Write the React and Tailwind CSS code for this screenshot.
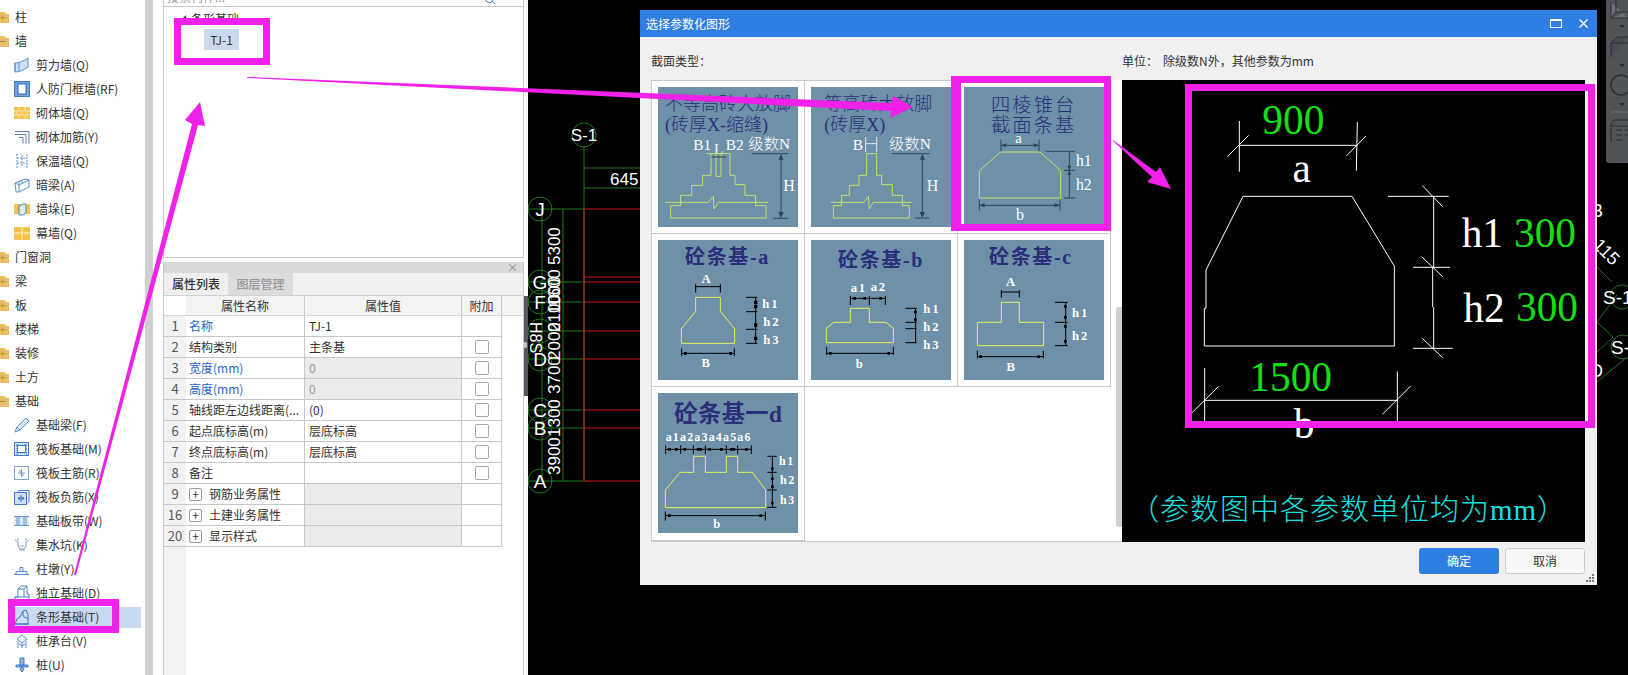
import React from "react";
import { Search } from "lucide-react";

const CJK = "font-['Noto_Sans_CJK_SC',sans-serif]";
const SERIF = "font-['Liberation_Serif','Noto_Sans_CJK_SC',serif]";
const SANS = "font-['Liberation_Sans','Noto_Sans_CJK_SC',sans-serif]";

const Folder = ({ open }) => (
  <svg width="9" height="14" viewBox="0 0 9 14" className="shrink-0">
    <path d="M0 2h5l1 2h3v9H0z" fill="#e6bd68" />
    <path d="M0 7h6v1H0z" fill={open ? "#a98a4a" : "#c9963c"} />
    {!open && <path d="M2 5h1v5H2z" fill="#c9963c" />}
  </svg>
);

// little tree icons, 16x16
const ICONS = {
  shear: (
    <>
      <path d="M1 6C5 6 10 4 14 1v9c-4 3-9 5-13 5z" fill="#cfe0f4" stroke="#5b8fd0" />
      <path d="M1 6v9M5 5.500v9" stroke="#5b8fd0" fill="none" />
    </>
  ),
  door: (
    <>
      <rect x="0.500" y="0.500" width="15" height="15" fill="#6fa0dc" stroke="#3f78c4" />
      <rect x="4" y="3" width="8" height="10" fill="#fff" stroke="#2f68b4" />
    </>
  ),
  brick: (
    <>
      <rect x="0" y="2" width="16" height="12" fill="#f7c24a" />
      <path d="M0 6h16M0 10h16M5 2v4M11 2v4M8 6v4M3 6v4M13 6v4M5 10v4M11 10v4" stroke="#fbe3a4" fill="none" />
    </>
  ),
  rebar: <path d="M1 2.500h14v12M1 5.500h11v9M5 8.500h4v6" stroke="#5b7fa8" fill="none" />,
  insul: <path d="M3 1v14M8 2v12M13 1v14M3 5h10M3 10h10" stroke="#5b8fd0" strokeDasharray="2 1" fill="none" />,
  beam: <path d="M1 6l10-4 4 1v7L5 15H2zM1 6l4 2v7M5 8l10-5M5 4.500l0 3M8 3.500v3" stroke="#5b8fd0" fill="#fff" />,
  pier: (
    <>
      <rect x="0" y="3" width="16" height="10" fill="#f7c24a" />
      <path d="M5 5l4-2h3v9l-3 2H5z" fill="#dcebfa" stroke="#4f84c8" />
    </>
  ),
  curtain: (
    <>
      <rect x="0" y="2" width="16" height="13" fill="#f7c24a" />
      <path d="M0 8h16M8 2v13" stroke="#fbe3a4" strokeWidth="1.500" />
    </>
  ),
  fbeam: <path d="M1 15l2-5 9-9 3 3-9 9zM3 10l3 3" stroke="#5b8fd0" fill="#dcebfa" />,
  raft: (
    <>
      <rect x="0.500" y="1.500" width="14" height="13" fill="#dcebfa" stroke="#3f78c4" />
      <rect x="3.500" y="4.500" width="8" height="7" fill="#fff" stroke="#3f78c4" />
      <path d="M0 4h15M0 12h15M3 1v14M12 1v14" stroke="#3f78c4" strokeDasharray="1 1" />
    </>
  ),
  raftMain: (
    <>
      <rect x="0.500" y="1.500" width="14" height="13" fill="#fff" stroke="#7da6d8" />
      <path d="M7.500 4v8M4 8h7M5 6h2M8 10h2" stroke="#6b94c8" fill="none" />
    </>
  ),
  raftNeg: (
    <>
      <rect x="0.500" y="3.500" width="12" height="12" fill="#cfe0f4" stroke="#3f78c4" />
      <path d="M3 3.500l2-2h10v11l-2 2" stroke="#3f78c4" fill="none" />
      <path d="M4 9h6M7 6v7M5 8v3M9 8v3" stroke="#2f68b4" fill="none" />
    </>
  ),
  strip: (
    <>
      <rect x="0" y="3" width="15" height="10" fill="#dcebfa" />
      <path d="M0 3.500h15M0 12.500h15M5 3v10M10 3v10M3 3v10M12 3v10" stroke="#6b94c8" fill="none" />
    </>
  ),
  pit: <path d="M1 3l3 2v4l2 3h4l2-3V5l3-2M6 9h4M3 2l2 1M11 3l2-1M5 13l6 0" stroke="#7f9cc0" fill="none" />,
  pad: <path d="M0 13.500h15M2 13.500v-3h11v3M6 10.500v-4h3v4" stroke="#5b8fd0" fill="#eef4fb" />,
  isolated: <path d="M1 15v-3h3V4l3-3h6v8h2v6zM4 4h6v8M10 4l3-3M1 12h14" stroke="#4f84c8" fill="#fff" />,
  stripF: (
    <>
      <path d="M1 15l2-5 3-2 3-6 3-1 2 5v9z" fill="#cfe0f4" stroke="#3f78c4" />
      <path d="M1 15h14M9 2v5l5 3" stroke="#3f78c4" fill="none" />
    </>
  ),
  cap: <path d="M3 6l5-4 5 4-5 4zM4 8v7M8 10v5M12 8v7M5 11l3 2 3-2" stroke="#5b8fd0" fill="#eef4fb" />,
  pile: <path d="M6 1h4v8H6zM2 8h12v2H2zM8 10l-2 2 2 3 2-3z" stroke="#3f78c4" fill="#8fb4e4" />,
};

const TREE = [
  { label: "柱" },
  { label: "墙", open: true },
  { label: "剪力墙(Q)", icon: "shear" },
  { label: "人防门框墙(RF)", icon: "door" },
  { label: "砌体墙(Q)", icon: "brick" },
  { label: "砌体加筋(Y)", icon: "rebar" },
  { label: "保温墙(Q)", icon: "insul" },
  { label: "暗梁(A)", icon: "beam" },
  { label: "墙垛(E)", icon: "pier" },
  { label: "幕墙(Q)", icon: "curtain" },
  { label: "门窗洞" },
  { label: "梁" },
  { label: "板" },
  { label: "楼梯" },
  { label: "装修" },
  { label: "土方" },
  { label: "基础", open: true },
  { label: "基础梁(F)", icon: "fbeam" },
  { label: "筏板基础(M)", icon: "raft" },
  { label: "筏板主筋(R)", icon: "raftMain" },
  { label: "筏板负筋(X)", icon: "raftNeg" },
  { label: "基础板带(W)", icon: "strip" },
  { label: "集水坑(K)", icon: "pit" },
  { label: "柱墩(Y)", icon: "pad" },
  { label: "独立基础(D)", icon: "isolated" },
  { label: "条形基础(T)", icon: "stripF", selected: true },
  { label: "桩承台(V)", icon: "cap" },
  { label: "桩(U)", icon: "pile" },
];

const PROPS = [
  { no: 1, name: "名称", value: "TJ-1", blue: true, nocheck: true },
  { no: 2, name: "结构类别", value: "主条基" },
  { no: 3, name: "宽度(mm)", value: "0", blue: true, off: true },
  { no: 4, name: "高度(mm)", value: "0", blue: true, off: true },
  { no: 5, name: "轴线距左边线距离(...", value: "(0)" },
  { no: 6, name: "起点底标高(m)", value: "层底标高" },
  { no: 7, name: "终点底标高(m)", value: "层底标高" },
  { no: 8, name: "备注", value: "" },
  { no: 9, name: "钢筋业务属性", group: true },
  { no: 16, name: "土建业务属性", group: true },
  { no: 20, name: "显示样式", group: true },
];

const Tree = () => (
  <aside className={`w-[145px] shrink-0 bg-white pt-[5px] text-[12px] text-[#333] ${CJK}`}>
    {TREE.map((t) => (
      <div key={t.label} className="h-[24px] flex items-center pr-[4px]">
        {t.icon ? (
          <div
            className={`ml-[14px] flex-1 h-[21px] flex items-center gap-[6px] whitespace-nowrap ${
              t.selected ? "bg-[#c9daf0]" : ""
            }`}
          >
            <svg width="16" height="16" viewBox="0 0 16 16" className="shrink-0">
              {ICONS[t.icon]}
            </svg>
            {t.label}
          </div>
        ) : (
          <div className="flex items-center gap-[6px]">
            <Folder open={t.open} />
            {t.label}
          </div>
        )}
      </div>
    ))}
  </aside>
);

const PropsTable = () => (
  <div className="relative flex-1 text-[12px] text-[#333]">
    <div className="absolute left-0 top-0 bottom-0 w-[22px] bg-[#f2f2f2]" />
    <div className="relative">
      <div className="h-[20px] bg-[#f3f3f3] grid grid-cols-[22px_119px_157px_40px] border-b border-[#d8d8d8] text-center leading-[19px]">
        <div className="bg-white" />
        <div className="border-r border-[#c8c8c8]">属性名称</div>
        <div className="border-r border-[#c8c8c8]">属性值</div>
        <div className="border-r border-[#c8c8c8]">附加</div>
      </div>
      <div className="w-[338px] bg-white">
        {PROPS.map((p) => (
          <div
            key={p.no}
            className="h-[21px] grid grid-cols-[22px_119px_157px_40px] border-b border-[#c8c8c8] leading-[20px]"
          >
            <div className="bg-[#f2f2f2] text-center text-[13px] text-[#555]">{p.no}</div>
            <div
              className={`border-r border-[#c8c8c8] pl-[3px] whitespace-nowrap overflow-hidden flex items-center ${
                p.blue ? "text-[#2e63c8]" : ""
              }`}
            >
              {p.group && (
                <span className="w-[13px] h-[13px] mr-[7px] border border-[#999] rounded-[2px] flex items-center justify-center text-[12px] leading-none">
                  +
                </span>
              )}
              {p.name}
            </div>
            <div
              className={`border-r border-[#c8c8c8] pl-[4px] ${p.off || p.group ? "bg-[#ebebeb]" : ""} ${
                p.off ? "text-[#999]" : ""
              }`}
            >
              {p.value}
            </div>
            <div className="border-r border-[#c8c8c8] flex items-center justify-center">
              {!p.nocheck && !p.group && (
                <span className="w-[14px] h-[14px] bg-white border border-[#a8a8a8] rounded-[2px]" />
              )}
            </div>
          </div>
        ))}
      </div>
    </div>
  </div>
);

const Middle = () => (
  <div className={`relative w-[375px] shrink-0 bg-white pl-[10px] pr-[4px] flex flex-col ${CJK}`}>
    <div className="h-[258px] border-x border-b border-[#c8c8c8]">
      <div className="h-[7px] border-b border-[#c8c8c8] overflow-hidden flex items-end justify-between pl-[3px] pr-[27px]">
        <span className="text-[12px] leading-[18px] text-[#999] shrink-0">搜索构件...</span>
        <Search size={12} className="shrink-0 text-[#3f78c4] mb-[1px]" />
      </div>
      <div className="pl-[14px] mt-[4px] text-[12px] leading-[16px] text-[#333] flex items-center gap-[5px]">
        <span className="text-[8px]">◢</span>条形基础
      </div>
      <div className="ml-[40px] mt-[2px] w-[35px] h-[21px] bg-[#c9daf0] text-[12px] leading-[21px] text-center text-[#333]">
        TJ-1
      </div>
    </div>
    <div className="mt-[4px] flex-1 border-x border-[#c8c8c8] flex flex-col">
      <div className="h-[11px] bg-[#d9d9d9] flex items-center justify-end pr-[5px] text-[11px] text-[#888]">×</div>
      <div className="h-[23px] bg-[#f0f0f0] flex text-[12px] border-b border-[#d0d0d0] leading-[22px]">
        <div className="w-[64px] text-center font-medium text-[#333]">属性列表</div>
        <div className="w-[65px] text-center bg-[#dcdcdc] text-[#999] font-medium">图层管理</div>
      </div>
      <PropsTable />
    </div>
    <div className="absolute right-0 top-[296px] w-[4px] h-[100px] bg-[#55595e]">
      <div className="absolute left-[-1px] top-[46px] w-[4px] h-[6px] rounded-full bg-[#c8c8c8]" />
    </div>
  </div>
);

const CadArea = () => (
  <div className={`flex-1 bg-black ${SANS}`}>
    <svg width="1100" height="675" viewBox="528 0 1100 675" className="block">
      <g stroke="#1f7a1f" fill="none">
        <circle cx="584" cy="135" r="12" />
        <path d="M584 147V481M584 168H640M584 188H640M542 209V481M563 209V481" />
        <path d="M528 209H584M528 282H584M528 302H584M528 331H584M528 359H584M528 410H584M528 428H584M528 481H584" />
        <circle cx="540" cy="209" r="12" />
        <circle cx="540" cy="282" r="12" />
        <circle cx="540" cy="302" r="12" />
        <circle cx="540" cy="331" r="12" />
        <circle cx="540" cy="359" r="12" />
        <circle cx="540" cy="410" r="12" />
        <circle cx="540" cy="428" r="12" />
        <circle cx="540" cy="481" r="12" />
      </g>
      <path
        d="M584 209V481M584 209H640M584 277H640M584 282H640M584 302H640M584 331H640M584 359H640M584 410H640M584 428H640M584 481H640"
        stroke="#c81818"
        fill="none"
      />
      <g fill="#fff" fontSize="17">
        <text x="584" y="141" textAnchor="middle" fontSize="17">S-1</text>
        <text x="610" y="185" fontSize="17">645</text>
        <text x="540" y="216" textAnchor="middle" fontSize="19">J</text>
        <text x="540" y="289" textAnchor="middle" fontSize="19">G</text>
        <text x="540" y="309" textAnchor="middle" fontSize="19">F</text>
        <text x="540" y="366" textAnchor="middle" fontSize="19">D</text>
        <text x="540" y="417" textAnchor="middle" fontSize="19">C</text>
        <text x="540" y="435" textAnchor="middle" fontSize="19">B</text>
        <text x="540" y="488" textAnchor="middle" fontSize="19">A</text>
        <text transform="translate(560 265) rotate(-90)">5300</text>
        <text transform="translate(560 307) rotate(-90)">1600</text>
        <text transform="translate(560 314) rotate(-90)">1000</text>
        <text transform="translate(560 332) rotate(-90)">2100</text>
        <text transform="translate(560 360) rotate(-90)">2000</text>
        <text transform="translate(560 394) rotate(-90)">3700</text>
        <text transform="translate(560 437) rotate(-90)">1300</text>
        <text transform="translate(560 475) rotate(-90)">3900</text>
        <text transform="translate(530 322) rotate(90)" fontSize="16">H8S</text>
      </g>
      {/* right of the dialog */}
      <g stroke="#2a6a2a" fill="none">
        <path d="M1597 267L1612 282M1597 322L1617 295M1597 322L1613 337M1597 352L1613 337M1597 382L1627 357" />
        <circle cx="1622" cy="297" r="12" />
        <circle cx="1623" cy="347" r="12" />
      </g>
      <g fill="#fff" fontSize="18">
        <text x="1591" y="217">B</text>
        <text transform="translate(1592 246) rotate(45)">115</text>
        <text x="1603" y="304" fontSize="19">S-1</text>
        <text x="1611" y="354" fontSize="19">S-</text>
        <text x="1590" y="377">D</text>
      </g>
      {/* right toolbar */}
      <rect x="1606" y="-5" width="30" height="168" rx="3" fill="#505358" />
      <g stroke="#2b2e33" fill="none">
        <path d="M1611 2V18H1628M1611 18L1616 12H1628M1616 12V0" fill="#6b6f75" />
        <path d="M1611 57V43L1617 37H1628M1611 43H1628" fill="#474a50" />
        <circle cx="1621" cy="85" r="10" strokeWidth="1.500" />
        <path d="M1611 112H1628" stroke="#6a6d72" />
        <path d="M1611 142V124L1614 120H1628M1611 126H1628M1616 130H1622M1616 135H1622M1616 140H1622M1625 130H1628M1625 135H1628" />
      </g>
      <path d="M1619 25H1625L1622 28ZM1619 64H1625L1622 67ZM1619 103H1625L1622 106Z" fill="#2b2e33" />
    </svg>
  </div>
);

const TITLE = "#2a2f7a";
const DARK = "#2c4658";
const LIME = "#c6e06a";
const YEL = "#e8f060";

const Thumb = ({ box, children }) => (
  <svg width="140" height="140" viewBox={`${box} 420 420`} className={`block ${SERIF}`}>
    <rect x={box.split(" ")[0]} y={box.split(" ")[1]} width="420" height="420" fill="#6e90a8" />
    {children}
  </svg>
);

const T = ({ x, y, s = 42, c = "#fff", w, a, ls, children }) => (
  <text x={x} y={y} fontSize={s} fill={c} fontWeight={w} textAnchor={a} letterSpacing={ls}>
    {children}
  </text>
);

const Thumbs = [
  <Thumb box="54 262" key="1">
    <T x="75" y="330" s="54" c={TITLE} w="300">不等高砖大放脚</T>
    <T x="75" y="395" s="54" c={TITLE} w="300">(砖厚X-缩缝)</T>
    <T x="160" y="450" s="46">B1</T>
    <T x="222" y="462" s="46">L</T>
    <T x="257" y="450" s="46">B2</T>
    <T x="325" y="447" s="46" w="300">级数N</T>
    <T x="430" y="573" s="48">H</T>
    <path d="M200 462H270V527H285V555H315V587H347V618H378V655H92V618H122V587H155V557H188V527H213V462M228 462V530H243V462M75 608H205L220 590L222 628L235 608H385" stroke={LIME} strokeWidth="3" fill="none" />
    <path d="M335 462H445M400 656H445M423 470V650M214 472H258" stroke={DARK} strokeWidth="3" fill="none" />
    <path d="M423 462L415 480H431ZM423 655L415 637H431Z" fill={DARK} />
  </Thumb>,
  <Thumb box="513 262" key="2">
    <T x="553" y="330" s="54" c={TITLE} w="300">等高砖大放脚</T>
    <T x="553" y="395" s="54" c={TITLE} w="300">(砖厚X)</T>
    <T x="638" y="450" s="46">B</T>
    <T x="747" y="447" s="46" w="300">级数N</T>
    <T x="860" y="573" s="48">H</T>
    <path d="M680 462H710V527H725V555H757V587H787V618H808V655H580V618H605V587H628V557H657V527H680ZM572 608H672L685 590L688 628L700 608H815" stroke={LIME} strokeWidth="3" fill="none" />
    <path d="M757 462H868M825 655H868M847 470V650" stroke={DARK} strokeWidth="3" fill="none" />
    <path d="M677 412V458M710 412V458M677 432H710" stroke="#dfe8ee" strokeWidth="3" fill="none" />
    <path d="M847 462L839 480H855ZM847 655L839 637H855Z" fill={DARK} />
  </Thumb>,
  <Thumb box="972 262" key="3">
    <T x="1053" y="336" s="58" c={TITLE} ls="6" w="300">四棱锥台</T>
    <T x="1053" y="398" s="58" c={TITLE} ls="6" w="300">截面条基</T>
    <T x="1126" y="430" s="44">a</T>
    <T x="1128" y="662" s="48">b</T>
    <T x="1308" y="500" s="47">h1</T>
    <T x="1308" y="570" s="47">h2</T>
    <path d="M1082 457H1200L1262 513V595H1018V513Z" stroke={LIME} strokeWidth="3" fill="none" />
    <path d="M1083 420V455M1197 420V455M1083 437H1197M1217 455H1305M1272 512H1305M1272 595H1305M1288 455V595M1018 600V632M1260 600V632M1018 617H1260" stroke={DARK} strokeWidth="3" fill="none" />
    <path d="M1083 437L1099 431V443ZM1197 437L1181 431V443ZM1288 512L1282 498H1294ZM1288 512L1282 526H1294ZM1018 617L1034 611V623ZM1260 617L1244 611V623Z" fill={DARK} />
  </Thumb>,
  <Thumb box="54 30" key="a">
    <T x="135" y="103" s="60" c={TITLE} w="700" ls="5">砼条基-a</T>
    <path d="M167 202H241V243L284 297V340H124V297L167 243Z" stroke={YEL} strokeWidth="3" fill="none" />
    <path d="M167 162V188M241 162V188M167 170H241M125 355V378M283 355V378M125 370H283M347 202V340M318 202H352M318 245H352M318 298H352M318 340H352" stroke="#000" strokeWidth="3" fill="none" />
    <path d="M342 212h10v10h-10zM342 225h10v10h-10zM342 280h10v10h-10zM342 320h10v10h-10zM132 366h8v8h-8zM268 366h8v8h-8z" fill="#000" />
    <T x="198" y="158" s="38" w="700" a="middle">A</T>
    <T x="197" y="410" s="38" w="700" a="middle">B</T>
    <T x="367" y="233" s="38" w="700" ls="6">h1</T>
    <T x="370" y="287" s="38" w="700" ls="6">h2</T>
    <T x="370" y="341" s="38" w="700" ls="6">h3</T>
  </Thumb>,
  <Thumb box="513 30" key="b">
    <T x="594" y="112" s="60" c={TITLE} w="700" ls="5">砼条基-b</T>
    <path d="M631 235H688V277H738L760 295V338H559V295L581 277H631Z" stroke={YEL} strokeWidth="3" fill="none" />
    <path d="M631 198V225M688 198V225M736 198V225M631 205H736M560 350V375M760 350V375M560 370H760M827 235V338M796 235H830M796 277H830M796 296H830M796 338H830" stroke="#000" strokeWidth="3" fill="none" />
    <path d="M640 201h8v8h-8zM670 201h8v8h-8zM717 201h8v8h-8zM567 366h8v8h-8zM742 366h8v8h-8zM822 242h8v8h-8zM822 265h8v8h-8z" fill="#000" />
    <T x="632" y="186" s="38" w="700" ls="5">a1</T>
    <T x="692" y="182" s="38" w="700" ls="5">a2</T>
    <T x="658" y="413" s="38" w="700" a="middle">b</T>
    <T x="850" y="250" s="38" w="700" ls="6">h1</T>
    <T x="850" y="304" s="38" w="700" ls="6">h2</T>
    <T x="850" y="358" s="38" w="700" ls="6">h3</T>
  </Thumb>,
  <Thumb box="972 30" key="c">
    <T x="1047" y="103" s="60" c={TITLE} w="700" ls="5">砼条基-c</T>
    <path d="M1084 217H1138V277H1211V347H1012V277H1084Z" stroke={YEL} strokeWidth="3" fill="none" />
    <path d="M1084 180V203M1138 180V203M1084 186H1138M1012 362V385M1210 362V385M1012 380H1210M1277 217V347M1245 217H1283M1245 277H1283M1245 347H1283" stroke="#000" strokeWidth="3" fill="none" />
    <path d="M1272 225h8v8h-8zM1272 258h8v8h-8zM1272 285h8v8h-8zM1272 330h8v8h-8zM1018 376h8v8h-8zM1192 376h8v8h-8z" fill="#000" />
    <T x="1112" y="167" s="38" w="700" a="middle">A</T>
    <T x="1112" y="422" s="38" w="700" a="middle">B</T>
    <T x="1296" y="260" s="38" w="700" ls="6">h1</T>
    <T x="1296" y="330" s="38" w="700" ls="6">h2</T>
  </Thumb>,
  <Thumb box="54 489" key="d">
    <T x="103" y="576" s="70" c={TITLE} w="700" ls="1">砼条基一d</T>
    <T x="77" y="632" s="36" w="700" ls="3.500">a1a2a3a4a5a6</T>
    <path d="M161 679H196V727H259V679H293V727H337L377 780V833H76V780L120 727H161Z" stroke={YEL} strokeWidth="3" fill="none" />
    <path d="M77 658H334M77 646V672M122 646V672M160 646V672M196 646V672M259 646V672M293 646V672M334 646V672M76 857H376M76 845V872M376 845V872M397 679V832M382 679H410M382 727H410M382 780H410M382 832H410" stroke="#000" strokeWidth="3" fill="none" />
    <path d="M85 654h8v8h-8zM105 654h8v8h-8zM130 654h8v8h-8zM170 654h16v8h-16zM205 654h8v8h-8zM240 654h8v8h-8zM270 654h16v8h-16zM315 654h8v8h-8zM84 853h8v8h-8zM358 853h8v8h-8zM393 712h8v8h-8zM393 742h8v8h-8zM393 766h8v8h-8zM393 815h8v8h-8z" fill="#000" />
    <T x="230" y="893" s="38" w="700" a="middle">b</T>
    <T x="417" y="706" s="36" w="700" ls="5">h1</T>
    <T x="420" y="763" s="36" w="700" ls="5">h2</T>
    <T x="420" y="823" s="36" w="700" ls="5">h3</T>
  </Thumb>,
];

const Preview = () => (
  <svg width="463" height="462" viewBox="6 60 1389 1386" className={`block shrink-0 bg-black ${SERIF}`}>
    <path
      d="M369 409H696L823 618V858H253V745H258V630ZM358 183V335M712 186L709 332M358 256H712M322 290L386 226M680 287L738 228M804 409H986M879 622H990M879 865H998M941 409V622M938 622V742M941 742V865M907 377L968 440M905 590L968 650M907 835L968 893M254 924V1100M832 934V1100M254 1021H832M216 1058L296 979M787 1063L872 978"
      stroke="#fff"
      strokeWidth="3"
      fill="none"
    />
    <T x="520" y="222" s="124" c="#12e012" a="middle">900</T>
    <T x="545" y="365" s="124" a="middle">a</T>
    <T x="1025" y="562" s="124">h1</T>
    <T x="1182" y="560" s="124" c="#12e012">300</T>
    <T x="1030" y="785" s="124">h2</T>
    <T x="1188" y="783" s="124" c="#12e012">300</T>
    <T x="512" y="993" s="124" c="#12e012" a="middle">1500</T>
    <T x="552" y="1135" s="124" a="middle">b</T>
    <T x="30" y="1380" s="87" c="#18e0e0" ls="3" w="300">（参数图中各参数单位均为mm）</T>
  </svg>
);

const Dialog = () => (
  <div className={`absolute left-[640px] top-[10px] w-[957px] h-[575px] bg-[#f0f0f0] flex flex-col text-[12px] text-[#333] ${CJK}`}>
    <div className="h-[27px] shrink-0 bg-[#2f7fe2] flex items-center pl-[6px] pr-[9px] text-white">
      <span className="flex-1">选择参数化图形</span>
      <span className="w-[12px] h-[9px] border border-white border-t-[2px] mr-[17px]" />
      <svg width="9" height="9" viewBox="0 0 9 9">
        <path d="M0.500 0.500L8.500 8.500M8.500 0.500L0.500 8.500" stroke="#fff" strokeWidth="1.300" />
      </svg>
    </div>
    <div className="h-[43px] shrink-0 flex items-center pl-[11px] pt-[5px]">
      <span className="w-[471px]">截面类型：</span>
      <span className="w-[41px]">单位：</span>
      <span>除级数N外，其他参数为mm</span>
    </div>
    <div className="h-[462px] shrink-0 flex pl-[11px]">
      <div className="relative w-[471px] bg-white border-b border-[#c8c8c8]">
        <div className="grid grid-cols-[153px_153px_153px] grid-rows-[153px_153px_154px] border-l border-t border-[#c8c8c8] w-fit">
          {Thumbs.map((thumb) => (
            <div key={thumb.key} className="border-r border-b border-[#c8c8c8] pl-[6px] pt-[6px]">
              {thumb}
            </div>
          ))}
        </div>
        <div className="absolute right-0 top-[227px] bottom-[14px] w-[6px] rounded-l-[3px] bg-[#cfcfcf]" />
      </div>
      <Preview />
    </div>
    <div className="flex-1 relative flex items-start justify-end gap-[6px] pt-[6px] pr-[12px]">
      <button className="w-[80px] h-[26px] bg-[#2f7fe2] rounded-[3px] text-white">确定</button>
      <button className="w-[80px] h-[26px] bg-[#f8f8f8] border border-[#cccccc] rounded-[3px] text-[#333]">取消</button>
      <svg width="9" height="9" viewBox="0 0 9 9" className="absolute right-[2px] bottom-[2px]">
        <path d="M6 0h2v2H6zM3 3h2v2H3zM6 3h2v2H6zM0 6h2v2H0zM3 6h2v2H3zM6 6h2v2H6z" fill="#777" />
      </svg>
    </div>
  </div>
);

// the pink marks someone drew on top of the screenshot
const Annotations = () => (
  <>
    <div className="absolute left-[174px] top-[18px] w-[96px] h-[47px] border-[7px] border-[#f022ea]" />
    <div className="absolute left-[8px] top-[599px] w-[111px] h-[34px] border-[7px] border-[#f022ea]" />
    <div className="absolute left-[951px] top-[76px] w-[160px] h-[155px] border-[7px] border-l-[10px] border-[#f022ea]" />
    <div className="absolute left-[1185px] top-[84px] w-[410px] h-[344px] border-[7px] border-[#f022ea]" />
    <svg width="1628" height="675" className="absolute inset-0 pointer-events-none">
      <path d="M74 575L192 124L185 120L200 102L205 126L198 125L76 575Z" fill="#f022ea" />
      <path d="M247 77L891 103L893 96L913 107L890 118L891 111L247 78Z" fill="#f022ea" />
      <path d="M1113 140L1156 172L1160 167L1171 189L1147 182L1152 177L1113 141Z" fill="#f022ea" />
    </svg>
  </>
);

export default function App() {
  return (
    <div className="relative w-[1628px] h-[675px] overflow-hidden flex bg-black">
      <Tree />
      <div className="w-[8px] shrink-0 bg-[#d0d0d0]" />
      <Middle />
      <CadArea />
      <Dialog />
      <Annotations />
    </div>
  );
}
